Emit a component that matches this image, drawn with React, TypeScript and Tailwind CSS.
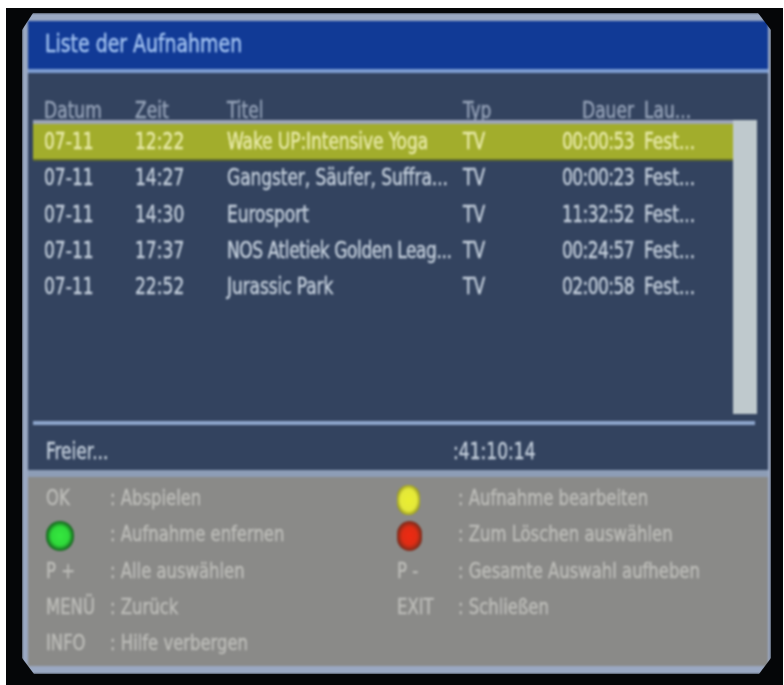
const font = "[font-family:'DejaVu_Sans_Condensed','DejaVu_Sans',sans-serif]";
const tall = "block scale-y-[1.2] [-webkit-text-stroke:0.35px_currentColor]";

const rows = [
  ["07-11", "12:22", "Wake UP:Intensive Yoga", "TV", "00:00:53", "Fest..."],
  ["07-11", "14:27", "Gangster, Säufer, Suffra...", "TV", "00:00:23", "Fest..."],
  ["07-11", "14:30", "Eurosport", "TV", "11:32:52", "Fest..."],
  ["07-11", "17:37", "NOS Atletiek Golden Leag...", "TV", "00:24:57", "Fest..."],
  ["07-11", "22:52", "Jurassic Park", "TV", "02:00:58", "Fest..."],
];

const cols = "grid grid-cols-[91px_92px_236px_80px_92px_1fr] pl-[11px] pr-1 items-center";

function Dot({ kind }: { kind: "green" | "yellow" | "red" }) {
  const c = {
    green: "bg-[radial-gradient(ellipse_at_center,#35e83f_0%,#2fd93a_44%,#176a20_68%,#5f7f58_90%,#8a8a88_100%)] w-[28px]",
    yellow: "bg-[radial-gradient(ellipse_at_center,#eaee30_0%,#e4e83a_50%,#8f9020_76%,#8a8a60_100%)] w-[23px]",
    red: "bg-[radial-gradient(ellipse_at_center,#ee2a12_0%,#df2c14_42%,#7c2c1c_70%,#8a5a4c_100%)] w-[25px]",
  }[kind];
  return <span className={`block h-[30px] rounded-full translate-y-[2px] ${c}`} />;
}

function HelpCell({ k, d, wide }: { k: React.ReactNode; d: string; wide?: boolean }) {
  return (
    <div className="flex items-center h-[36.3px]">
      <div className={wide ? "w-[61px] shrink-0 flex" : "w-[64px] shrink-0 flex"}>
        {typeof k === "string" ? <span className={tall}>{k}</span> : k}
      </div>
      <div className={`whitespace-nowrap ${tall}`}>{d}</div>
    </div>
  );
}

export default function App() {
  return (
    <div className={`w-[784px] h-[685px] bg-white overflow-hidden pt-2 pl-[6px] ${font}`}>
      <div className="w-[777px] h-[677px] bg-[#050608] pt-[5px] pl-[16px]">
        <div className="w-[749px] h-[661px] bg-[#9aa8c2] pt-2 pl-[6px] pr-[3px] pb-2 [clip-path:polygon(11px_0,calc(100%-13px)_0,100%_17px,100%_calc(100%-16px),calc(100%-12px)_100%,12px_100%,0_calc(100%-16px),0_17px)] blur-[0.9px]">
          <div className="h-full flex flex-col">
            <div className="h-[48px] shrink-0 bg-[#113a96] flex items-center pl-[17px] text-[21px] text-[#a4c4f2]">
              <span className={tall}>Liste der Aufnahmen</span>
            </div>
            <div className="h-[4px] shrink-0 bg-[#7d9dd2]" />
            <div className="h-[397px] shrink-0 bg-[#33435f] pl-[5px] flex flex-col">
              <div className={`${cols} h-[47px] w-[700px] shrink-0 pt-[27px] text-[19px] text-[#95a2b8] leading-none`}>
                <span className={tall}>Datum</span>
                <span className={tall}>Zeit</span>
                <span className={tall}>Titel</span>
                <span className={tall}>Typ</span>
                <span className={`text-right pr-[1px] ${tall}`}>Dauer</span>
                <span className={`pl-[9px] ${tall}`}>Lau...</span>
              </div>
              <div className="relative flex h-[294px] shrink-0">
                <div className="w-[700px] shrink-0 text-[19px] text-[#c3cedb]">
                  {rows.map((r, i) => (
                    <div
                      key={r[0] + r[1]}
                      className={
                        i === 0
                          ? `${cols} h-[41px] border-t-4 border-[#9ea6b8] border-b-2 border-b-[#5f6b2c] bg-[#a2ad2c] text-[#e8eaa8]`
                          : `${cols} h-[36.3px] pb-[3px]`
                      }
                    >
                      <span className={tall}>{r[0]}</span>
                      <span className={tall}>{r[1]}</span>
                      <span className={`whitespace-nowrap ${i === 3 ? "tracking-[-0.45px]" : "tracking-[-0.1px]"} ${tall}`}>{r[2]}</span>
                      <span className={tall}>{r[3]}</span>
                      <span className={`text-right pr-[1px] tracking-[-0.6px] ${tall}`}>{r[4]}</span>
                      <span className={`pl-[9px] ${tall}`}>{r[5]}</span>
                    </div>
                  ))}
                </div>
                <div className="w-[24px] shrink-0 bg-[#bfc9cd]" />
              </div>
              <div className="h-[7px] shrink-0" />
              <div className="h-[4px] w-[722px] shrink-0 bg-[#8ea6cc]" />
              <div className="flex-1 grid grid-cols-[407px_1fr] items-center pl-[13px] pt-2 text-[19px] text-[#c3cedb]">
                <span className={tall}>Freier...</span>
                <span className={tall}>:41:10:14</span>
              </div>
            </div>
            <div className="h-[7px] shrink-0 bg-[#8d9db6]" />
            <div className="flex-1 bg-[#8a8a88] pl-[18px] pt-[3px] text-[18.3px] text-[#bcbcb8] grid grid-cols-[351px_1fr] content-start leading-none">
              <HelpCell k="OK" d=": Abspielen" />
              <HelpCell wide k={<Dot kind="yellow" />} d=": Aufnahme bearbeiten" />
              <HelpCell k={<Dot kind="green" />} d=": Aufnahme enfernen" />
              <HelpCell wide k={<Dot kind="red" />} d=": Zum Löschen auswählen" />
              <HelpCell k="P +" d=": Alle auswählen" />
              <HelpCell wide k="P -" d=": Gesamte Auswahl aufheben" />
              <HelpCell k="MENÜ" d=": Zurück" />
              <HelpCell wide k="EXIT" d=": Schließen" />
              <HelpCell k="INFO" d=": Hilfe verbergen" />
            </div>
          </div>
        </div>
      </div>
    </div>
  );
}
